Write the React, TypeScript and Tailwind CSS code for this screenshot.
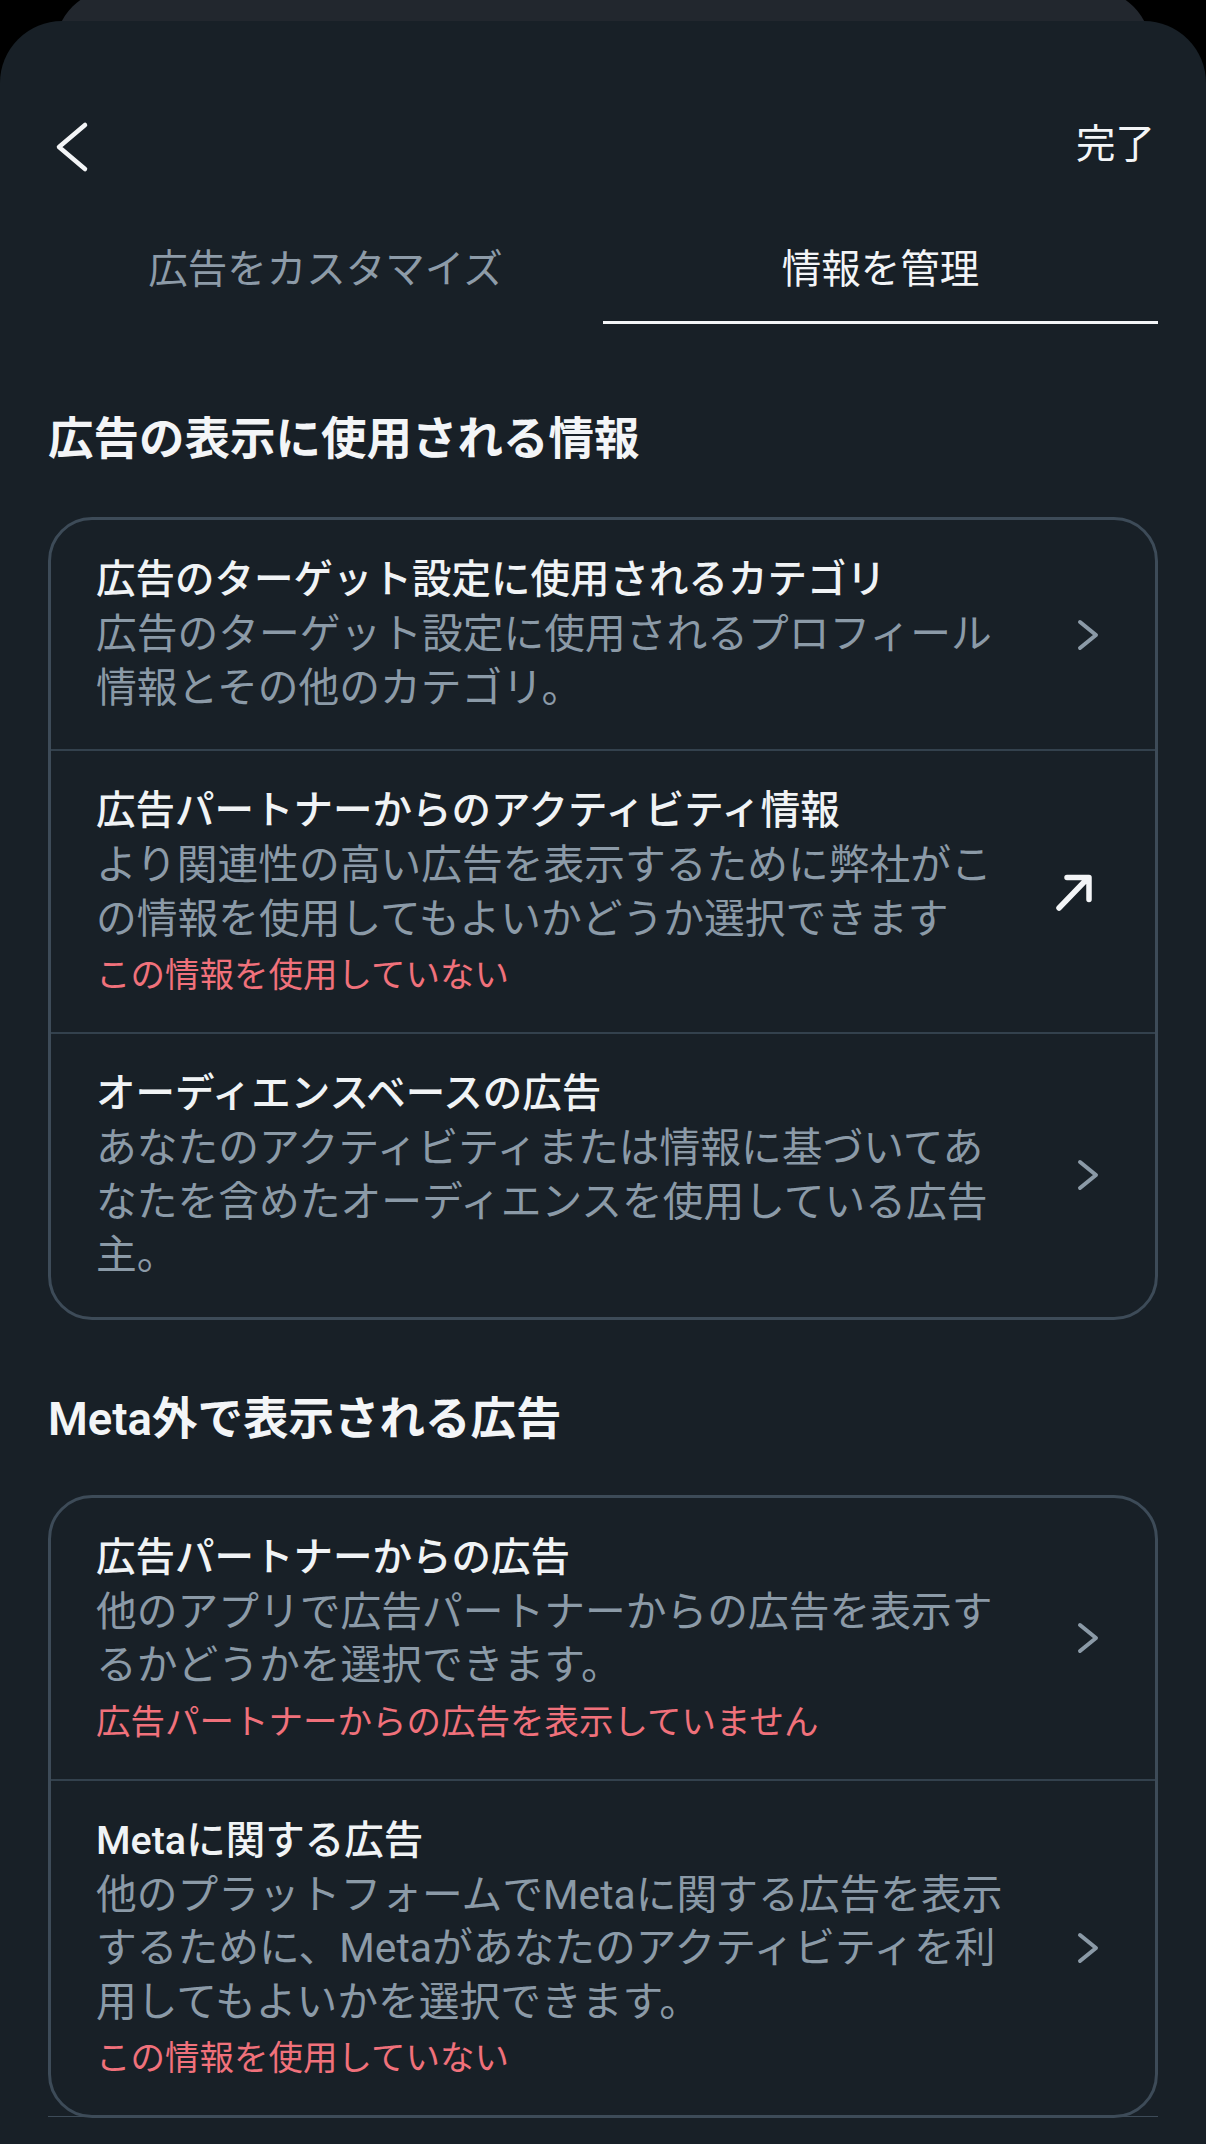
import React from "react";

type Row = {
  title: string;
  desc: string;
  status?: string;
  external?: boolean;
};

const infoRows: Row[] = [
  {
    title: "広告のターゲット設定に使用されるカテゴリ",
    desc: "広告のターゲット設定に使用されるプロフィール情報とその他のカテゴリ。",
  },
  {
    title: "広告パートナーからのアクティビティ情報",
    desc: "より関連性の高い広告を表示するために弊社がこの情報を使用してもよいかどうか選択できます",
    status: "この情報を使用していない",
    external: true,
  },
  {
    title: "オーディエンスベースの広告",
    desc: "あなたのアクティビティまたは情報に基づいてあなたを含めたオーディエンスを使用している広告主。",
  },
];

const outsideRows: Row[] = [
  {
    title: "広告パートナーからの広告",
    desc: "他のアプリで広告パートナーからの広告を表示するかどうかを選択できます。",
    status: "広告パートナーからの広告を表示していません",
  },
  {
    title: "Metaに関する広告",
    desc: "他のプラットフォームでMetaに関する広告を表示するために、Metaがあなたのアクティビティを利用してもよいかを選択できます。",
    status: "この情報を使用していない",
  },
];

function ChevronRight() {
  return (
    <svg width="48" height="40" viewBox="0 0 48 40" fill="none">
      <path d="M28 7 L44 20 L28 33" stroke="#8b9aa7" strokeWidth="4" strokeLinecap="round" strokeLinejoin="round" />
    </svg>
  );
}

function ArrowUpRight() {
  return (
    <svg width="48" height="40" viewBox="0 0 48 40" fill="none">
      <path d="M7 36 L35 7 M15 5.5 H37 V27.5" stroke="#f3f5f7" strokeWidth="5.5" strokeLinecap="round" strokeLinejoin="round" />
    </svg>
  );
}

function SettingRow({ row }: { row: Row }) {
  return (
    <div className="flex items-center pl-[45px] pr-[55px] pt-[34px] pb-[34px]">
      <div className="min-w-0 flex-1">
        <div className="text-[39.5px] font-medium leading-[52px] text-[#f0f3f5]">{row.title}</div>
        <div className="mt-[2px] text-[40.75px] leading-[53.5px] text-[#8b9aa7]">{row.desc}</div>
        {row.status && (
          <div className="mt-[6px] text-[34.5px] leading-[46px] text-[#f0717b]">{row.status}</div>
        )}
      </div>
      <div className="ml-[38px] w-[48px] shrink-0">
        {row.external ? <ArrowUpRight /> : <ChevronRight />}
      </div>
    </div>
  );
}

function SettingCard({ rows }: { rows: Row[] }) {
  return (
    <div className="overflow-hidden rounded-[44px] border-[3px] border-[#3d4b58] divide-y-2 divide-[#33414d]">
      {rows.map((row) => (
        <SettingRow key={row.title} row={row} />
      ))}
    </div>
  );
}

export default function App() {
  return (
    <div className="flex h-screen flex-col overflow-hidden bg-black font-['Roboto','Noto_Sans_CJK_JP',sans-serif]">
      {/* sheet peeking from behind */}
      <div className="mx-[55px] -mt-[11px] h-[80px] shrink-0 rounded-t-[60px] bg-[#22272e]" />

      <div className="relative -mt-[48px] flex-1 rounded-t-[62px] bg-[#182027] px-[48px] pt-[74px]">
        {/* header */}
        <div className="flex h-[104px] items-center justify-between">
          <svg width="48" height="52" viewBox="0 0 48 52" fill="none">
            <path d="M37 4 L11 26 L37 48" stroke="#f3f5f7" strokeWidth="4.5" strokeLinecap="round" strokeLinejoin="round" />
          </svg>
          <span className="-mt-[4px] pr-[3px] text-[39.5px] leading-[52px] text-[#f3f5f7]">完了</span>
        </div>

        {/* tabs */}
        <div className="grid grid-cols-2">
          <div className="border-b-[3px] border-transparent pt-[45px] pb-[25px] text-center text-[39.5px] leading-[52px] text-[#8d9ba8]">
            広告をカスタマイズ
          </div>
          <div className="border-b-[3px] border-[#f3f5f7] pt-[45px] pb-[25px] text-center text-[39.5px] leading-[52px] text-[#f3f5f7]">
            情報を管理
          </div>
        </div>

        <h2 className="mt-[86px] text-[45.5px] font-semibold leading-[60px] text-[#f3f5f7]">広告の表示に使用される情報</h2>
        <div className="mt-[47px]">
          <SettingCard rows={infoRows} />
        </div>

        <h2 className="mt-[70px] text-[45.5px] font-semibold leading-[60px] text-[#f3f5f7]">Meta外で表示される広告</h2>
        <div className="mt-[45px]">
          <SettingCard rows={outsideRows} />
        </div>
        <div className="-mt-[2px] h-px bg-[#3d4b58]" />
      </div>
    </div>
  );
}
